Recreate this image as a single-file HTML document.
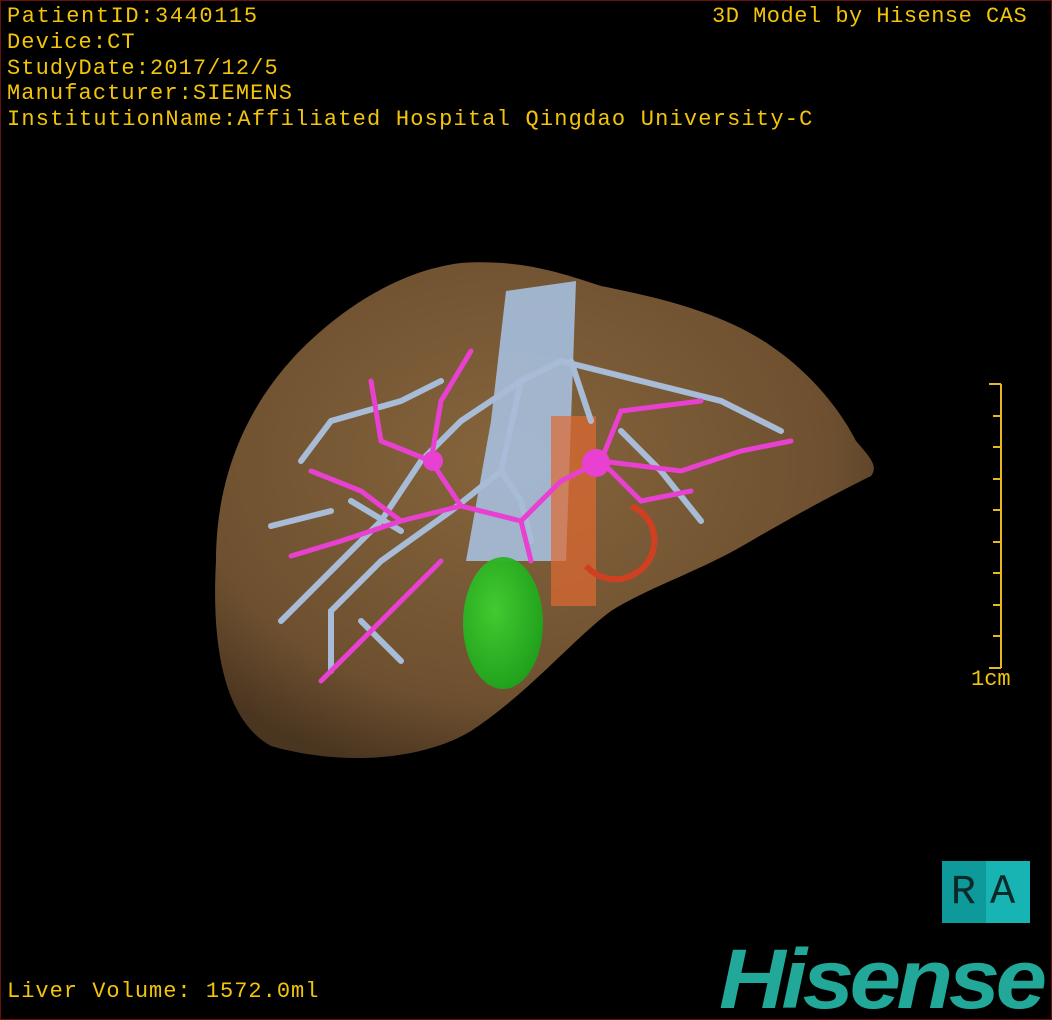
<!DOCTYPE html>
<html><head><style>
html,body{margin:0;padding:0;background:#000;}
#s{position:relative;width:1050px;height:1018px;border:1px solid #6a1010;overflow:hidden;background:#000;}
.t{position:absolute;color:#f2c40a;font-family:"Liberation Mono",monospace;font-size:22px;letter-spacing:1.1px;white-space:nowrap;line-height:26px;}
</style></head><body><div id="s">
<svg width="1050" height="1018" style="position:absolute;left:0;top:0">
<defs>
<radialGradient id="lv" cx="0.45" cy="0.4" r="0.65"><stop offset="0" stop-color="#86653c"/><stop offset="0.75" stop-color="#6e5030"/><stop offset="1" stop-color="#4a3520"/></radialGradient>
<radialGradient id="gb" cx="0.4" cy="0.4" r="0.7"><stop offset="0" stop-color="#40d030"/><stop offset="1" stop-color="#18a018"/></radialGradient>
</defs>
<path d="M215,560 C215,470 250,390 320,330 C360,295 410,268 460,262 C520,258 560,272 600,285 C650,295 720,310 770,345 C810,372 840,410 855,440 C868,455 878,465 870,475 C850,485 810,505 750,540 C700,570 650,585 610,610 C570,640 530,690 470,730 C420,760 340,765 270,745 C225,720 210,650 215,560 Z" fill="url(#lv)"/>
<path d="M505,290 L575,280 L570,420 L565,560 L465,560 L490,420 Z" fill="#a8c4e8" opacity="0.85"/>
<rect x="550" y="415" width="45" height="190" fill="#e06a30" opacity="0.7"/>
<path d="M630,505 C665,520 660,570 620,578 C600,580 590,570 585,565" stroke="#d04020" stroke-width="6" fill="none"/>
<g stroke="#a8bcd8" stroke-width="6" fill="none" stroke-linecap="round">
<path d="M520,380 L500,470 L450,510 L380,560 L330,610 L330,670"/>
<path d="M520,380 L560,360 L640,380 L720,400 L780,430"/>
<path d="M520,380 L460,420 L420,460 L380,520 L340,560 L280,620"/>
<path d="M500,470 L520,500 L530,540"/>
<path d="M440,380 L400,400 L330,420 L300,460"/>
<path d="M620,430 L660,470 L700,520"/>
<path d="M330,510 L270,525"/><path d="M360,620 L400,660"/>
<path d="M400,530 L350,500"/><path d="M570,360 L590,420"/>
</g>
<g stroke="#e840d0" stroke-width="5" fill="none" stroke-linecap="round">
<path d="M530,560 L520,520 L460,505 L400,520 L340,540 L290,555"/>
<path d="M460,505 L430,460 L440,400 L470,350"/>
<path d="M520,520 L560,480 L600,460 L680,470 L740,450 L790,440"/>
<path d="M600,460 L620,410 L700,400"/>
<path d="M440,560 L400,600 L360,640 L320,680"/>
<path d="M430,460 L380,440 L370,380"/>
<path d="M600,460 L640,500 L690,490"/>
<path d="M400,520 L360,490 L310,470"/>
</g>
<circle cx="595" cy="462" r="14" fill="#e840d0"/>
<circle cx="432" cy="460" r="10" fill="#e840d0"/>
<ellipse cx="502" cy="622" rx="40" ry="66" fill="url(#gb)" opacity="0.95"/>
<g stroke="#e8b820" stroke-width="2">
<line x1="1000" y1="383" x2="1000" y2="667"/>
<line x1="988" y1="383" x2="1000" y2="383"/><line x1="992" y1="415" x2="1000" y2="415"/><line x1="992" y1="446" x2="1000" y2="446"/><line x1="992" y1="478" x2="1000" y2="478"/><line x1="992" y1="509" x2="1000" y2="509"/><line x1="992" y1="541" x2="1000" y2="541"/><line x1="992" y1="572" x2="1000" y2="572"/><line x1="992" y1="604" x2="1000" y2="604"/><line x1="992" y1="635" x2="1000" y2="635"/><line x1="988" y1="667" x2="1000" y2="667"/>
</g>
</svg>
<div class="t" style="left:6px;top:3px;letter-spacing:1.6px">PatientID:3440115</div>
<div class="t" style="left:6px;top:29px">Device:CT</div>
<div class="t" style="left:6px;top:55px">StudyDate:2017/12/5</div>
<div class="t" style="left:6px;top:80px">Manufacturer:SIEMENS</div>
<div class="t" style="left:6px;top:106px;letter-spacing:1.2px">InstitutionName:Affiliated Hospital Qingdao University-C</div>
<div class="t" style="left:711px;top:3px;letter-spacing:0.5px">3D Model by Hisense CAS</div>
<div class="t" style="left:970px;top:666px;letter-spacing:0">1cm</div>
<div class="t" style="left:6px;top:978px;letter-spacing:1px">Liver Volume: 1572.0ml</div>
<div style="position:absolute;left:941px;top:860px;width:88px;height:62px;background:linear-gradient(90deg,#0e9a9a 50%,#18b4b4 50%);font-family:'Liberation Mono',monospace;font-size:42px;color:#0a2a2a;line-height:62px;letter-spacing:14px;text-indent:8px;text-align:center;">RA</div>
<div style="position:absolute;left:718px;top:928px;font-family:'Liberation Sans',sans-serif;font-weight:bold;font-style:italic;font-size:84px;color:#22a898;letter-spacing:-4px;line-height:100px;transform:scaleX(1.1);transform-origin:left;">Hisense</div>
</div></body></html>
